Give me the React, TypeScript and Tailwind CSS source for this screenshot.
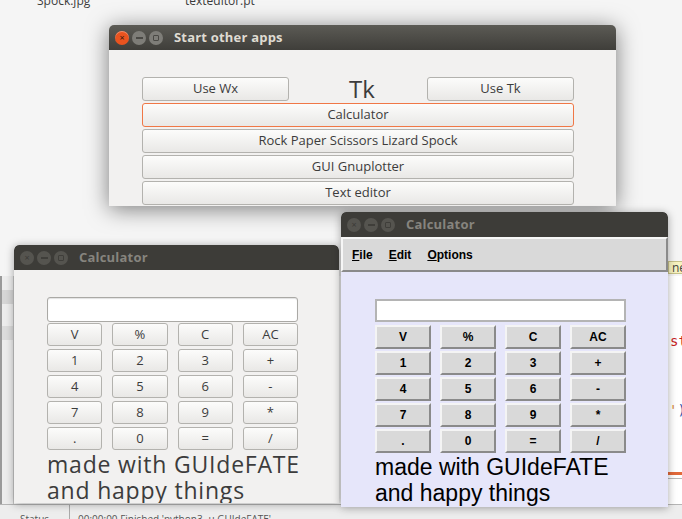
import React from 'react'

const ubuntu = { fontFamily: '"Open Sans", "Noto Sans", sans-serif' }
const helv = { fontFamily: '"Liberation Sans", Arial, sans-serif' }

function TitleButtons({ active }: { active?: boolean }) {
  return (
    <div className="flex items-center gap-[3px]">
      <span
        className={
          'flex h-[14px] w-[14px] items-center justify-center rounded-full text-[9px] leading-none ' +
          (active ? 'bg-[#e9531f] text-[#3a1a0c] shadow-[inset_0_1px_0_rgba(255,255,255,0.35)]' : 'bg-[#55544f] text-[#3c3b37]')
        }
      >
        ×
      </span>
      <span className={'flex h-[14px] w-[14px] items-center justify-center rounded-full ' + (active ? 'bg-[#7e7d78]' : 'bg-[#55544f]')}>
        <span className={'h-[2px] w-[7px] ' + (active ? 'bg-[#4a4945]' : 'bg-[#3f3e3a]')} />
      </span>
      <span className={'flex h-[14px] w-[14px] items-center justify-center rounded-full ' + (active ? 'bg-[#7e7d78]' : 'bg-[#55544f]')}>
        <span className={'h-[6px] w-[6px] rounded-[1px] border ' + (active ? 'border-[#4a4945]' : 'border-[#3f3e3a]')} />
      </span>
    </div>
  )
}

function TitleBar({ title, active }: { title: string; active?: boolean }) {
  return (
    <div
      className={
        'flex h-[25px] shrink-0 items-center gap-[11px] rounded-t-[5px] pl-[6px] ' +
        (active ? 'bg-gradient-to-b from-[#5c5b55] to-[#3f3e3a]' : 'bg-[#3d3c38]')
      }
    >
      <TitleButtons active={active} />
      <span
        className={'text-[13px] font-bold tracking-[0.2px] ' + (active ? 'text-[#dfdbd2]' : 'text-[#86847e]')}
        style={ubuntu}
      >
        {title}
      </span>
    </div>
  )
}

function GtkButton({ label, focus, className = '' }: { label: string; focus?: boolean; className?: string }) {
  return (
    <div
      className={
        'flex items-center justify-center rounded-[3px] border bg-gradient-to-b from-[#fcfcfb] to-[#e9e8e6] text-[13px] text-[#3c3c3c] ' +
        (focus ? 'border-[#f07746] ' : 'border-[#b3b2ae] ') +
        className
      }
      style={ubuntu}
    >
      {label}
    </div>
  )
}

function TkButton({ label }: { label: string }) {
  return (
    <div
      className="flex h-[24px] items-center justify-center border-2 border-t-[#f4f4f4] border-l-[#f4f4f4] border-r-[#8a8a8a] border-b-[#8a8a8a] bg-[#d9d9d9] text-[12px] font-bold text-black"
      style={helv}
    >
      {label}
    </div>
  )
}

const keys = ['V', '%', 'C', 'AC', '1', '2', '3', '+', '4', '5', '6', '-', '7', '8', '9', '*', '.', '0', '=', '/']

export default function App() {
  return (
    <div className="relative h-[519px] w-[682px] overflow-hidden bg-[#f5f5f5]">
      {/* desktop file labels, cut off at the top */}
      <div className="absolute left-[37px] top-[-8px] text-[12px] text-[#3c3c3c]" style={ubuntu}>
        Spock.jpg
      </div>
      <div className="absolute left-[185px] top-[-8px] text-[12px] text-[#3c3c3c]" style={ubuntu}>
        texteditor.pt
      </div>

      {/* editor window behind */}
      <div className="absolute left-0 top-[276px] h-[243px] w-[682px] border-l-2 border-[#9a9a9a] bg-white">
        <div className="flex h-full w-[12px] flex-col border-r border-[#c8c8c8] bg-[#ededed]">
          <div className="mt-[14px] h-[14px] bg-[#d6d6d6]" />
          <div className="mt-[22px] h-[14px] bg-[#dcdcdc]" />
        </div>
      </div>
      <div
        className="absolute left-[668px] top-[261px] h-[13px] w-[20px] border border-[#c8c28a] bg-[#f7f3c0] pl-[3px] text-[12px] leading-[11px] text-[#444]"
        style={ubuntu}
      >
        ner
      </div>
      <div className="absolute left-[670px] top-[331px] text-[14px] text-[#c81e1e]" style={{ fontFamily: '"DejaVu Sans Mono", monospace' }}>
        st
      </div>
      <div className="absolute left-[669px] top-[400px] text-[14px]" style={{ fontFamily: '"DejaVu Sans Mono", monospace' }}>
        <span className="text-[#d98b3a]">'</span>
        <span className="text-[#2b4fa8]">)</span>
      </div>
      <div className="absolute left-[660px] top-[472px] h-[3px] w-[22px] bg-[#e2693a]" />
      <div className="absolute left-[660px] top-[478px] h-[1px] w-[22px] bg-[#b8b8b8]" />
      <div className="absolute left-0 top-[504px] flex h-[15px] w-[682px] items-start border-t border-[#b5b5b5] bg-[#ededed] text-[10px] text-[#555]" style={ubuntu}>
        <span className="w-[70px] border-r border-[#aaa] pl-[20px] leading-[28px]">Status</span>
        <span className="pl-[8px] leading-[28px]">00:00:00 Finished 'python3 -u GUIdeFATE'</span>
      </div>

      {/* Start other apps */}
      <div className="absolute left-[109px] top-[25px] flex h-[181px] w-[507px] flex-col rounded-t-[5px] shadow-[0_3px_22px_rgba(0,0,0,0.5)]">
        <TitleBar title="Start other apps" active />
        <div className="flex flex-1 flex-col gap-[2px] bg-[#f2f1f0] pl-[33px] pr-[42px] pt-[27px]">
          <div className="flex h-[24px] items-center">
            <GtkButton label="Use Wx" className="h-[24px] w-[147px]" />
            <div className="flex-1 pl-[8px] text-center text-[24px] leading-[24px] text-[#3c3c3c]" style={ubuntu}>
              Tk
            </div>
            <GtkButton label="Use Tk" className="h-[24px] w-[147px]" />
          </div>
          <GtkButton label="Calculator" focus className="h-[24px]" />
          <GtkButton label="Rock Paper Scissors Lizard Spock" className="h-[24px]" />
          <GtkButton label="GUI Gnuplotter" className="h-[24px]" />
          <GtkButton label="Text editor" className="h-[24px]" />
        </div>
      </div>

      {/* GTK calculator */}
      <div className="absolute left-[14px] top-[245px] flex h-[258px] w-[325px] flex-col overflow-hidden rounded-t-[5px] shadow-[0_1px_8px_rgba(0,0,0,0.35)]">
        <TitleBar title="Calculator" />
        <div className="flex flex-1 flex-col bg-[#f2f1f0] pl-[33px] pt-[27px]">
          <div className="h-[25px] w-[251px] rounded-[3px] border border-[#aaa9a5] bg-white shadow-[inset_0_1px_1px_rgba(0,0,0,0.12)]" />
          <div className="mt-[1px] grid w-[251px] grid-cols-4 gap-x-[10px] gap-y-[3px]">
            {keys.map((k) => (
              <GtkButton key={k} label={k} className="h-[23px]" />
            ))}
          </div>
          <div className="mt-[1px] text-[23px] leading-[26px] tracking-[0.8px] text-[#3c3c3c]" style={ubuntu}>
            made with GUIdeFATE
            <br />
            and happy things
          </div>
        </div>
      </div>

      {/* Tk calculator */}
      <div className="absolute left-[341px] top-[212px] flex h-[295px] w-[327px] flex-col overflow-hidden rounded-t-[5px] shadow-[0_1px_8px_rgba(0,0,0,0.35)]">
        <TitleBar title="Calculator" />
        <div
          className="flex h-[35px] shrink-0 items-center gap-[16px] border-2 border-t-[#f6f6f6] border-l-[#f6f6f6] border-r-[#8a8a8a] border-b-[#8a8a8a] bg-[#d9d9d9] pl-[9px] text-[12px] font-bold text-black"
          style={helv}
        >
          <span>
            <span className="underline">F</span>ile
          </span>
          <span>
            <span className="underline">E</span>dit
          </span>
          <span>
            <span className="underline">O</span>ptions
          </span>
        </div>
        <div className="flex flex-1 flex-col bg-[#e6e6fa] pl-[34px] pt-[27px]">
          <div className="h-[23px] w-[251px] border-2 border-[#b4b4b4] bg-white" />
          <div className="mt-[3px] grid w-[251px] grid-cols-4 gap-x-[9px] gap-y-[2px]">
            {keys.map((k) => (
              <TkButton key={k} label={k} />
            ))}
          </div>
          <div className="mt-[1px] text-[23px] leading-[26px] text-black" style={helv}>
            made with GUIdeFATE
            <br />
            and happy things
          </div>
        </div>
      </div>
    </div>
  )
}
